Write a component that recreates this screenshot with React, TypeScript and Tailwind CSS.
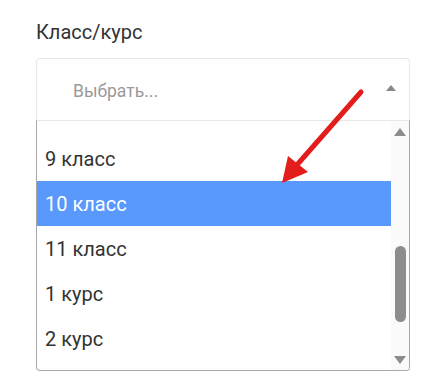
import React from "react";

const options = ["9 класс", "10 класс", "11 класс", "1 курс", "2 курс"];

export default function App() {
  return (
    <div className="relative w-[441px] h-[387px] bg-white font-['Roboto',sans-serif] pl-9 pt-[20px]">
      <div className="text-[20px] leading-[24px] text-[#333]">Класс/курс</div>

      <div className="mt-[14px] w-[374px]">
        {/* select head */}
        <div className="h-[62px] border border-b-0 border-[#e8e8e8] rounded-t-[4px] flex items-center pl-9 pr-[13px] pt-1">
          <span className="flex-1 text-[17.5px] text-[#999]">Выбрать...</span>
          <span className="w-0 h-0 border-l-[5px] border-r-[5px] border-b-[6px] border-l-transparent border-r-transparent border-b-[#888] -mt-2"></span>
        </div>

        {/* listbox */}
        <div className="h-[251px] border border-[#a8a8a8] border-t-[#e8e8e8] rounded-b-[4px] flex overflow-hidden">
          <div className="flex-1 pt-[15px]">
            {options.map((o) => (
              <div
                key={o}
                className={
                  "h-[45px] flex items-center pl-2 text-[20px] " +
                  (o === "10 класс" ? "bg-[#5899fb] text-white" : "text-[#333]")
                }
              >
                {o}
              </div>
            ))}
          </div>
          <div className="w-[18px] bg-[#fafafa] flex flex-col items-center">
            <span className="mt-[7px] w-0 h-0 border-l-[6px] border-r-[6px] border-b-[8px] border-l-transparent border-r-transparent border-b-[#8c8c8c]"></span>
            <div className="flex-1 w-full flex flex-col items-center pt-[110px]">
              <div className="w-[11px] h-[76px] rounded-full bg-[#8c8c8c]"></div>
            </div>
            <span className="mb-[6px] w-0 h-0 border-l-[6px] border-r-[6px] border-t-[8px] border-l-transparent border-r-transparent border-t-[#8c8c8c]"></span>
          </div>
        </div>
      </div>

      {/* red arrow */}
      <svg className="absolute left-0 top-0" width="441" height="387" viewBox="0 0 441 387">
        <line x1="361" y1="92" x2="296" y2="166" stroke="#e31c1c" strokeWidth="5" strokeLinecap="round" />
        <polygon points="282,183 288,156 308,172" fill="#e31c1c" />
      </svg>
    </div>
  );
}
